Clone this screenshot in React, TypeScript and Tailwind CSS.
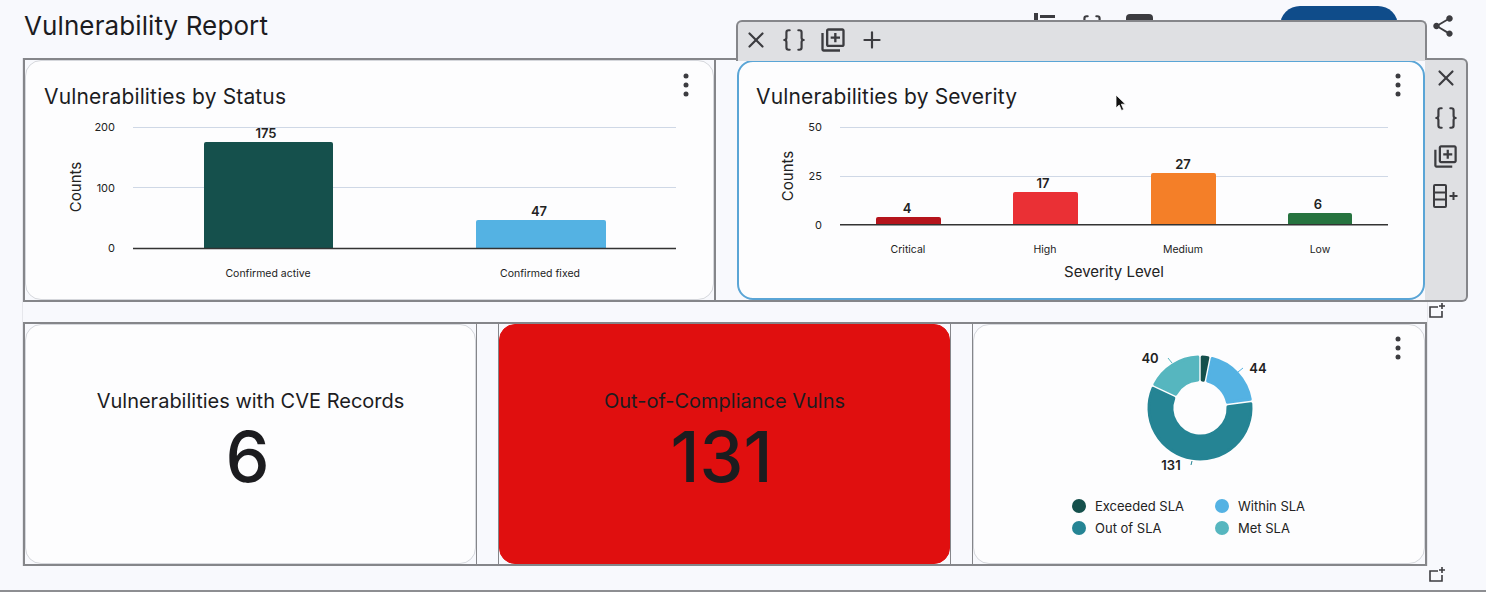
import React from 'react';
import { X, Braces, Plus } from 'lucide-react';
import { MdOutlineLibraryAdd, MdShare } from 'react-icons/md';

const Kebab = ({ className }: { className: string }) => (
  <svg className={`absolute ${className}`} width="8" height="24" viewBox="0 0 8 24">
    <circle cx="4" cy="3" r="2.5" fill="#3c3c40" />
    <circle cx="4" cy="12" r="2.5" fill="#3c3c40" />
    <circle cx="4" cy="21" r="2.5" fill="#3c3c40" />
  </svg>
);

const AddCorner = ({ className }: { className: string }) => (
  <svg className={className} width="18" height="16" viewBox="0 0 18 16" fill="none" stroke="#3c3c40" strokeWidth="1.6">
    <path d="M10 4H2v10h12V8" />
    <path d="M14 0v6M11 3h6" />
  </svg>
);

const RowAdd = () => (
  <svg width="27" height="26" viewBox="0 0 27 26" fill="none" stroke="#3c3c40" strokeWidth="2">
    <rect x="2" y="2" width="12" height="22" rx="1" />
    <path d="M2 9.500h12M2 16.500h12" />
    <path d="M21.500 9v8M17.500 13h8" />
  </svg>
);

type Bar = { x: number; y: number; w: number; h: number; color: string; label: string; lx: number };

const Bars = ({ bars }: { bars: Bar[] }) => (
  <>
    {bars.map((b) => (
      <g key={b.label}>
        <path
          d={`M${b.x} ${b.y + b.h}V${b.y + 2}q0 -2 2 -2H${b.x + b.w - 2}q2 0 2 2V${b.y + b.h}Z`}
          fill={b.color}
        />
        <text x={b.lx} y={b.y - 4} textAnchor="middle" fontSize="13" fontWeight="600" className="fill-[#222]">
          {b.label}
        </text>
      </g>
    ))}
  </>
);

const StatusChart = () => (
  <svg className="block fill-[#222]" width="687" height="185" viewBox="26 115 687 185">
    <path d="M133 127.500H676M133 187.500H676" stroke="#cfd8e6" strokeWidth="1.2" />
    <text x="115" y="131" textAnchor="end" fontSize="11">200</text>
    <text x="115" y="192" textAnchor="end" fontSize="11">100</text>
    <text x="115" y="252" textAnchor="end" fontSize="11">0</text>
    <text transform="translate(81 187) rotate(-90)" textAnchor="middle" fontSize="15">Counts</text>
    <Bars
      bars={[
        { x: 204, y: 142, w: 129, h: 107, color: '#15504c', label: '175', lx: 266 },
        { x: 476, y: 220, w: 130, h: 29, color: '#54b2e3', label: '47', lx: 539 },
      ]}
    />
    <path d="M133 248.500H676" stroke="#333" strokeWidth="1.5" />
    <text x="268" y="277" textAnchor="middle" fontSize="10.500">Confirmed active</text>
    <text x="540" y="277" textAnchor="middle" fontSize="10.500">Confirmed fixed</text>
  </svg>
);

const SeverityChart = () => (
  <svg className="block fill-[#222]" width="684" height="183" viewBox="739 115 684 183">
    <path d="M840 127.500H1388M840 176.500H1388" stroke="#cfd8e6" strokeWidth="1.2" />
    <text x="822" y="131" textAnchor="end" fontSize="11">50</text>
    <text x="822" y="180" textAnchor="end" fontSize="11">25</text>
    <text x="822" y="229" textAnchor="end" fontSize="11">0</text>
    <text transform="translate(793 176) rotate(-90)" textAnchor="middle" fontSize="15">Counts</text>
    <Bars
      bars={[
        { x: 876, y: 217, w: 65, h: 8, color: '#b5141c', label: '4', lx: 907 },
        { x: 1013, y: 192, w: 65, h: 33, color: '#ea3035', label: '17', lx: 1043 },
        { x: 1151, y: 173, w: 65, h: 52, color: '#f47f28', label: '27', lx: 1183 },
        { x: 1288, y: 213, w: 64, h: 12, color: '#26733f', label: '6', lx: 1318 },
      ]}
    />
    <path d="M840 224.800H1388" stroke="#333" strokeWidth="1.5" />
    <text x="908" y="253" textAnchor="middle" fontSize="10.500">Critical</text>
    <text x="1045" y="253" textAnchor="middle" fontSize="10.500">High</text>
    <text x="1183" y="253" textAnchor="middle" fontSize="10.500">Medium</text>
    <text x="1320" y="253" textAnchor="middle" fontSize="10.500">Low</text>
    <text x="1114" y="277" textAnchor="middle" fontSize="15">Severity Level</text>
  </svg>
);

// donut slices, angles in degrees clockwise from the top
const slices = [
  { value: 7, color: '#15504c' },
  { value: 44, color: '#54b2e3' },
  { value: 131, color: '#258494' },
  { value: 40, color: '#56b6bf' },
];

const point = (cx: number, cy: number, r: number, deg: number) => {
  const a = ((deg - 90) * Math.PI) / 180;
  return `${(cx + r * Math.cos(a)).toFixed(2)} ${(cy + r * Math.sin(a)).toFixed(2)}`;
};

const slicePath = (start: number, end: number) => {
  const cx = 1200;
  const cy = 408;
  const outer = 51;
  const inner = 28;
  const gap = 2.2;
  const oPad = (Math.asin(gap / outer) * 180) / Math.PI;
  const iPad = (Math.asin(gap / inner) * 180) / Math.PI;
  const large = end - start > 180 ? 1 : 0;
  return [
    `M${point(cx, cy, outer, start + oPad)}`,
    `A${outer} ${outer} 0 ${large} 1 ${point(cx, cy, outer, end - oPad)}`,
    `L${point(cx, cy, inner, end - iPad)}`,
    `A${inner} ${inner} 0 ${large} 0 ${point(cx, cy, inner, start + iPad)}`,
    'Z',
  ].join('');
};

const Donut = () => {
  let angle = 0;
  return (
    <svg className="block fill-[#222]" width="450" height="170" viewBox="974 325 450 170">
      {slices.map((s) => {
        const start = angle;
        angle += (s.value / 222) * 360;
        return (
          <path
            key={s.value}
            d={slicePath(start, angle)}
            fill={s.color}
            stroke={s.color}
            strokeWidth="3"
            strokeLinejoin="round"
          />
        );
      })}
      <path d="M1168 358l4 5" stroke="#56b6bf" fill="none" />
      <path d="M1238 372l5 -4" stroke="#54b2e3" fill="none" />
      <path d="M1191 465l1 -4" stroke="#258494" fill="none" />
      <text x="1150" y="363" textAnchor="middle" fontSize="13" fontWeight="600">40</text>
      <text x="1258" y="373" textAnchor="middle" fontSize="13" fontWeight="600">44</text>
      <text x="1171" y="470" textAnchor="middle" fontSize="13" fontWeight="600">131</text>
    </svg>
  );
};

const LegendItem = ({ dot, label }: { dot: string; label: string }) => (
  <div className="flex items-center gap-[9px]">
    <span className={`w-[14px] h-[14px] rounded-full ${dot}`} />
    <span className="text-[13px] leading-[22px] text-[#222]">{label}</span>
  </div>
);

const StatCard = ({ title, value, red }: { title: string; value: string; red?: boolean }) => (
  <div
    className={`h-full rounded-2xl border flex flex-col items-center pt-[62px] ${
      red ? 'bg-[#e00f0f] border-[#e00f0f]' : 'bg-[#fdfdfe] border-[#d5d7dc]'
    }`}
  >
    <div className="text-[20px] leading-[28px] text-[#1c1c1f]">{title}</div>
    <div className="text-[70px] leading-[84px] font-medium mr-[6px] text-[#1c1c1f]">{value}</div>
  </div>
);

export default function App() {
  return (
    <div className="relative h-[592px] overflow-hidden bg-[#f8f9fd] border-b-2 border-[#8d8e92] font-[family-name:Inter,sans-serif]">
      <header className="h-[58px] pl-[24px] pr-[30px] flex items-center pb-[6px]">
        <h1 className="text-[26px] leading-[32px] tracking-[0.1px] text-[#1c1c1f]">Vulnerability Report</h1>
        <div className="ml-auto flex items-center">
          <svg className="mr-[24px] mb-[2px] text-[#3c3c40]" width="21" height="24" viewBox="0 0 21 24" fill="currentColor">
            <rect x="0" y="0" width="4" height="24" />
            <rect x="6" y="2" width="15" height="3" />
            <rect x="6" y="9" width="15" height="3" />
          </svg>
          <Braces size={26} strokeWidth={2} className="mr-[21px] text-[#3c3c40]" />
          <div className="w-[27px] h-[24px] rounded bg-[#3c3c40] mr-[127px]" />
          <div className="w-[118px] h-[40px] rounded-[20px] bg-[#0f4c8a] mr-[32px]" />
          <MdShare size={26} className="text-[#3c3c40]" />
        </div>
      </header>

      <main className="ml-[22px] w-[1406px] border-x border-[#e6e7ec]">
        <section className="h-[244px] flex border-2 border-[#85868a]">
          <div className="relative w-[689px] bg-[#fdfdfe] border border-[#d5d7dc] rounded-2xl">
            <Kebab className="top-[12px] right-[23px]" />
            <div className="h-[54px] pl-[18px] pt-[23px] text-[21px] leading-[26px] tracking-[0.15px] text-[#1c1c1f]">
              Vulnerabilities by Status
            </div>
            <StatusChart />
          </div>
          <div className="w-[23px] border-l-2 border-[#85868a]" />
          <div className="relative flex-1 bg-[#fdfdfe] border-2 border-[#5aa5d6] rounded-2xl">
            <Kebab className="top-[11px] right-[21px]" />
            <div className="h-[53px] pl-[17px] pt-[22px] text-[21px] leading-[26px] tracking-[0.15px] text-[#1c1c1f]">
              Vulnerabilities by Severity
            </div>
            <SeverityChart />
          </div>
        </section>

        <div className="h-[20px]" />

        <section className="h-[244px] grid grid-cols-[452px_453px_453px] gap-[21px] border-2 border-[#85868a]">
          <div className="border-r border-[#85868a]">
            <StatCard title="Vulnerabilities with CVE Records" value="6" />
          </div>
          <div className="border-x border-[#85868a]">
            <StatCard title="Out-of-Compliance Vulns" value="131" red />
          </div>
          <div className="border-l border-[#85868a]">
            <div className="relative h-full bg-[#fdfdfe] border border-[#d5d7dc] rounded-2xl">
              <Kebab className="top-[11px] right-[22px]" />
              <Donut />
              <div className="ml-[98px] w-[260px] grid grid-cols-[143px_1fr]">
                <LegendItem dot="bg-[#15504c]" label="Exceeded SLA" />
                <LegendItem dot="bg-[#54b2e3]" label="Within SLA" />
                <LegendItem dot="bg-[#258494]" label="Out of SLA" />
                <LegendItem dot="bg-[#56b6bf]" label="Met SLA" />
              </div>
            </div>
          </div>
        </section>
      </main>

      {/* edit toolbars floating over the selected tile */}
      <div className="absolute left-[736px] top-[20px] w-[691px] h-[41px] bg-[#dfe0e3] border-2 border-b-0 border-[#85868a] rounded-t-md flex items-center gap-[12px] pl-[5px] pb-[3px] text-[#3c3c40]">
        <X size={26} strokeWidth={2} />
        <Braces size={26} strokeWidth={2} />
        <MdOutlineLibraryAdd size={28} />
        <Plus size={26} strokeWidth={2} />
      </div>
      <div className="absolute left-[1425px] top-[58px] w-[43px] h-[244px] bg-[#dfe0e3] border-2 border-l-0 border-[#85868a] rounded-r-md flex flex-col items-center gap-[12.500px] pt-[5px] text-[#3c3c40]">
        <X size={26} strokeWidth={2} />
        <Braces size={26} strokeWidth={2} className="mt-[1px]" />
        <MdOutlineLibraryAdd size={27} />
        <RowAdd />
      </div>

      <AddCorner className="absolute left-[1428px] top-[303px]" />
      <AddCorner className="absolute left-[1428px] top-[567px]" />

      {/* mouse pointer */}
      <svg className="absolute left-[1115px] top-[94px]" width="12" height="18" viewBox="0 0 12 18">
        <path d="M1 1v13l3.200-3 2.300 5.500 2.200-1-2.300-5.300H10.500Z" fill="#111" stroke="#fff" strokeWidth="0.8" />
      </svg>
    </div>
  );
}
